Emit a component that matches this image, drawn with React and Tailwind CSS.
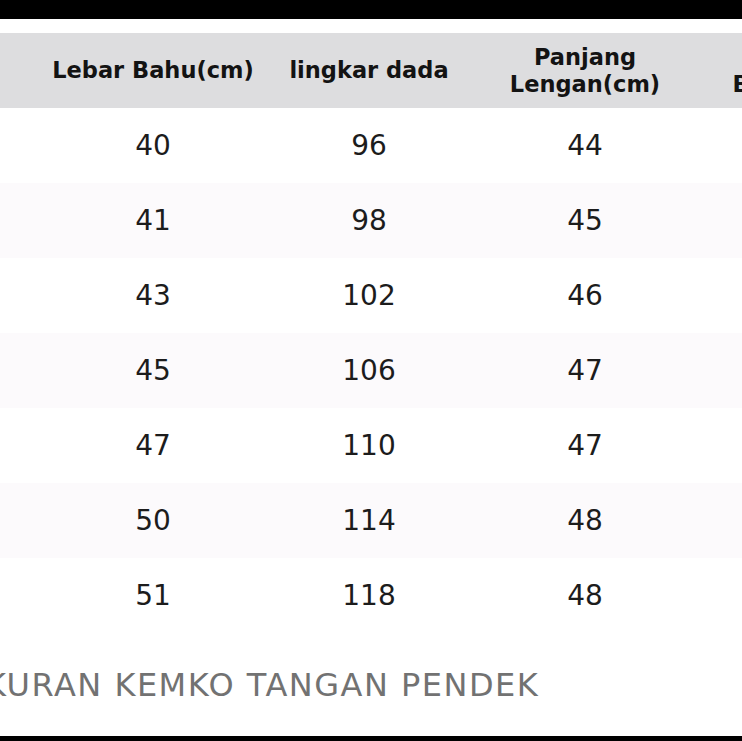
import React from 'react';

const rows = [
    ['40', '96', '44'],
    ['41', '98', '45'],
    ['43', '102', '46'],
    ['45', '106', '47'],
    ['47', '110', '47'],
    ['50', '114', '48'],
    ['51', '118', '48'],
];

const font = { fontFamily: '"DejaVu Sans", "Liberation Sans", sans-serif' };

const App = () => {
    return (
        <div className="w-[742px] h-[741px] overflow-hidden bg-white flex flex-col" style={font}>
            <div className="h-[19px] bg-black shrink-0"></div>
            <div className="h-[14px] shrink-0"></div>

            {/* header */}
            <div className="flex h-[75px] bg-[#dddddf] shrink-0 text-[22.5px] font-bold leading-[27px] text-[#131313]">
                <div className="w-[45px] shrink-0"></div>
                <div className="w-[216px] shrink-0 flex items-center justify-center text-center">Lebar Bahu(cm)</div>
                <div className="w-[216px] shrink-0 flex items-center justify-center text-center">lingkar dada</div>
                <div className="w-[216px] shrink-0 flex items-center justify-center text-center">Panjang<br />Lengan(cm)</div>
                <div className="w-[216px] shrink-0 flex items-center justify-center text-center whitespace-nowrap">Panjang<br />Badan(cm)</div>
            </div>

            {/* body */}
            {rows.map((r, i) => (
                <div key={i} className={`flex h-[75px] shrink-0 text-[28px] text-[#1c1c1c] ${i % 2 === 1 ? 'bg-[#fcfafc]' : 'bg-white'}`}>
                    <div className="w-[45px] shrink-0"></div>
                    {r.map((v, j) => (
                        <div key={j} className="w-[216px] shrink-0 flex items-center justify-center">{v}</div>
                    ))}
                </div>
            ))}

            <div className="flex-1 flex items-center">
                <div className="ml-[-40px] whitespace-nowrap text-[32px] text-[#727272] tracking-[1.5px]">UKURAN KEMKO TANGAN PENDEK</div>
            </div>
            <div className="h-[5px] bg-black shrink-0"></div>
        </div>
    );
};

export default App;
